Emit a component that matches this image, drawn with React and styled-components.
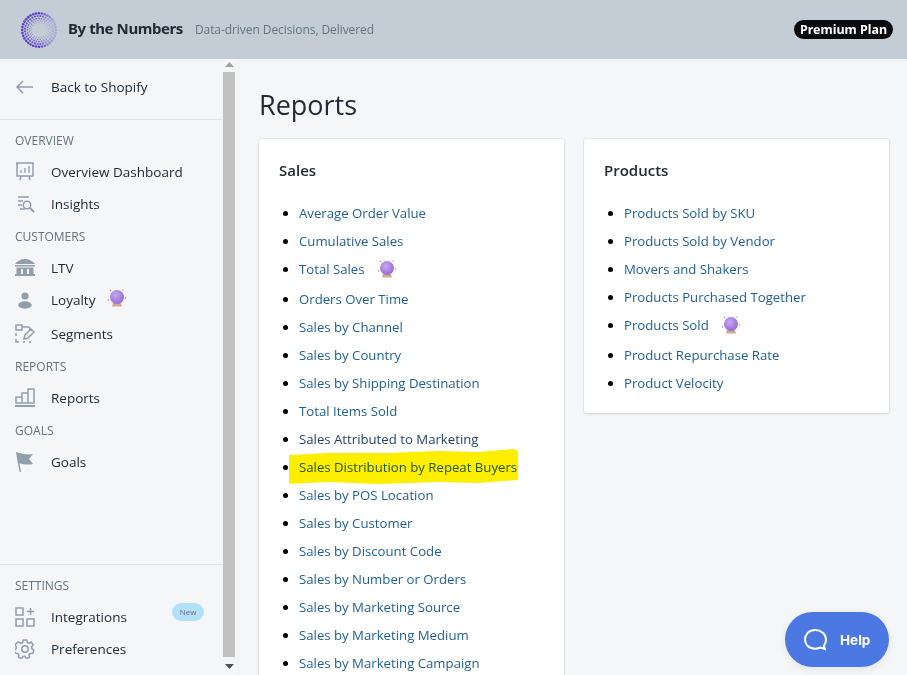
import React from 'react';
import styled, { createGlobalStyle } from 'styled-components';

const Global = createGlobalStyle`
  html, body { margin: 0; padding: 0; height: 100%; overflow: hidden; }
  body { font-family: "Open Sans", "Noto Sans", sans-serif; background: #f4f6f8; color: #212b36; }
  * { box-sizing: border-box; }
`;

const Page = styled.div`display:flex;flex-direction:column;height:675px;overflow:hidden;position:relative;`;
const Header = styled.header`height:59px;flex:none;background:#c4cdd5;display:flex;align-items:center;padding:0 14px 0 21px;`;
const Brand = styled.strong`margin-left:11px;font:700 15px/20px "Noto Sans",sans-serif;color:#212b36;letter-spacing:-.42px;position:relative;top:-2px;`;
const Tagline = styled.span`margin-left:12px;font-size:12px;letter-spacing:-.07px;color:#637381;`;
const Plan = styled.span`margin-left:auto;background:#0b0b0d;color:#fff;border-radius:10px;height:19px;width:99px;display:flex;align-items:center;justify-content:center;font:700 12.5px/19px "Noto Sans",sans-serif;`;
const Body = styled.div`flex:1;display:flex;min-height:0;`;
const Sidebar = styled.aside`width:223px;flex:none;display:flex;flex-direction:column;`;
const BackRow = styled.div`height:61px;flex:none;margin-bottom:4px;display:flex;align-items:center;padding:0 15px 4px 15px;border-bottom:1px solid #dfe3e8;font-size:13.5px;font-weight:500;color:#212b36;`;
const Section = styled.div`height:32px;display:flex;align-items:center;padding-left:15px;font-size:12px;color:#637381;flex:none;`;
const Item = styled.div`height:${p => p.$h || 32}px;flex:none;display:flex;align-items:center;padding:${p => p.$h ? 2 : 0}px 19px 0 15px;font-size:13.5px;font-weight:500;color:#212b36;`;
const IconSlot = styled.span`width:20px;height:20px;flex:none;display:flex;align-items:center;justify-content:center;margin-right:16px;color:#919eab;`;
const Spacer = styled.div`flex:1;`;
const SettingsBlock = styled.div`border-top:1px solid #dfe3e8;flex:none;padding:4px 0 10px;`;
const NewBadge = styled.span`margin-left:auto;align-self:flex-start;margin-top:2px;width:32px;height:18px;border-radius:9px;background:#b4e1fa;font-size:8px;line-height:18px;text-align:center;color:#637381;`;
const Track = styled.div`width:16px;flex:none;background:#f5f6f7;border-right:1px solid #f1f2f3;display:flex;flex-direction:column;padding-right:3px;`;
const Arrow = styled.span`height:${p => p.$h}px;padding-bottom:${p => p.$pb || 0}px;flex:none;display:flex;align-items:center;justify-content:center;`;
const Thumb = styled.div`flex:1;background:#c1c1c1;`;
const Main = styled.main`flex:1;padding:27px 18px 0 20px;min-width:0;overflow:hidden;background:#f4f6f8;`;
const Title = styled.h1`margin:0 0 16px;font-size:27px;line-height:37px;font-weight:500;color:#212b36;`;
const Columns = styled.div`display:grid;grid-template-columns:305px 305px;gap:20px;align-items:start;`;
const Card = styled.section`background:#fff;border-radius:3px;box-shadow:0 0 0 1px rgba(63,63,68,.05),0 1px 3px rgba(63,63,68,.15);padding:20px 20px 16px;`;
const CardTitle = styled.h2`margin:-1px 0 17px;font-size:15px;line-height:24px;font-weight:600;color:#212b36;`;
const List = styled.ul`margin:0;padding:0 0 0 20px;font-size:13.2px;list-style:disc;color:#000;`;
const Row = styled.li`height:${p => p.$ball ? 30 : 28}px;line-height:28px;position:relative;`;
const Link = styled.a`color:${p => p.$dark ? '#23466c' : '#1f5f94'};text-decoration:none;`;
const Ball = styled.span`display:inline-block;margin-left:12px;vertical-align:-5px;`;
const Marker = styled.svg`position:absolute;left:-11px;top:-5px;width:231px;height:37px;mix-blend-mode:multiply;pointer-events:none;`;
const Help = styled.div`position:absolute;left:785px;top:612px;width:104px;height:55px;border-radius:28px;background:#4c78e3;color:#fff;display:flex;align-items:center;padding-left:18px;gap:11px;font:700 13.5px/16px Inter,sans-serif;box-shadow:0 2px 8px rgba(0,0,0,.08);`;

const dots = [];
[[16.8, 36, 1.3], [14, 32, 1.05], [11.6, 28, .85], [9.5, 24, .65], [7.7, 20, .5]].forEach(([r, n, s], k) => {
  for (let i = 0; i < n; i++) {
    const a = (i + (k % 2) * .5) / n * Math.PI * 2;
    const cos = Math.cos(a), sin = Math.sin(a);
    const fade = cos > .1 ? Math.max(.25, 1 - cos * .85) : 1;
    dots.push(<circle key={`${k}-${i}`} cx={18 + r * cos} cy={18 + r * sin} r={s} fill="#5a3fcb" opacity={fade * (1 - k * .12)} />);
  }
});
const Logo = () => <svg width="36" height="36" viewBox="0 0 36 36">{dots}</svg>;

const CrystalBall = () => (
  <svg width="20" height="20" viewBox="0 0 20 20">
    <defs><radialGradient id="cb" cx=".4" cy=".35" r=".7"><stop offset="0" stopColor="#c7a9ee" /><stop offset="1" stopColor="#9468d8" /></radialGradient></defs>
    <path d="M6 15h8l1 3.500H5z" fill="#cfa98e" />
    <circle cx="10" cy="9" r="7" fill="url(#cb)" />
    <circle cx="1.500" cy="12" r=".8" fill="#9a94a8" /><circle cx="18.500" cy="10" r=".8" fill="#9a94a8" />
    <circle cx="3.500" cy="2.500" r=".8" fill="#9a94a8" /><circle cx="16" cy="2" r=".7" fill="#9a94a8" />
  </svg>
);

const Ico = ({ children }) => <svg width="20" height="20" viewBox="0 0 20 20" fill="none" stroke="#919eab" strokeWidth="1.5">{children}</svg>;
const icons = {
  back: <Ico><path d="M18 10H2M8 4l-6 6 6 6" /></Ico>,
  dash: <Ico><path d="M1 1h18M2 1v13h16V1M6 14l-1 4M14 14l1 4" /><path d="M6 11V8M10 11V6M14 11V4" strokeWidth="1.3" /></Ico>,
  insights: <Ico><path d="M3 3h11M3 7h5M3 11h4M5 15h5" /><circle cx="12" cy="11" r="3.700" /><path d="M15 14l4 4" strokeWidth="2" /></Ico>,
  bank: <svg width="20" height="20" viewBox="0 0 20 20" fill="#919eab"><path d="M10 1C6 1 2 3 0 6h20c-2-3-6-5-10-5zM0 7h20v1.500H0zM0 18h20v-2H0zM1.500 9.500h17V16h-4.500v-5h-2v5H8v-5H6v5H1.500z" /></svg>,
  user: <svg width="20" height="20" viewBox="0 0 20 20" fill="#919eab"><circle cx="10" cy="6" r="3.600" /><ellipse cx="10" cy="15" rx="6.800" ry="3.700" /></svg>,
  seg: <Ico><path d="M1 1h6v5H1zM7 3h6c2 0 2 2 2 3" /><path d="M9 15l1-4 6-6 3 3-6 6zM1 9v3M1 15v3h3M8 18h2M14 18h2" /></Ico>,
  rep: <Ico><path d="M1 9h6v6H1zM7 5h6v10H7zM13 1h6v14h-6z" /><path d="M0 18h20" strokeWidth="2" /></Ico>,
  flag: <svg width="20" height="20" viewBox="0 0 20 20" fill="#919eab"><path d="M1 0h1.500l3.500 20H4.600L2.500 9zM2 0c5 2 10 3 16 2l-4 5 4 5c-5 1-9 .6-14-1z" /></svg>,
  integ: <Ico><path d="M1 1h7v7H1zM1 12h7v7H1zM12 12h7v7h-7zM15.500 1v7M12 4.500h7" /></Ico>,
  gear: <Ico><circle cx="10" cy="10" r="3.200" /><path d="M8.300 1h3.400l.6 2.600 1.500.7 2.400-1.300 2.100 2.700-1.700 2 .2 1.800 2 1.600-.9 3.200-2.700.1-1.100 1.300.4 2.700-3.200 1-1.500-2.200h-1.600l-1.500 2.200-3.200-1 .4-2.700-1.100-1.300-2.700-.1-.9-3.200 2-1.600.2-1.800-1.700-2L3.600 3l2.400 1.300 1.500-.7z" /></Ico>,
};

const sales = ['Average Order Value', 'Cumulative Sales', 'Total Sales*', 'Orders Over Time', 'Sales by Channel', 'Sales by Country', 'Sales by Shipping Destination', 'Total Items Sold', 'Sales Attributed to Marketing', 'Sales Distribution by Repeat Buyers', 'Sales by POS Location', 'Sales by Customer', 'Sales by Discount Code', 'Sales by Number or Orders', 'Sales by Marketing Source', 'Sales by Marketing Medium', 'Sales by Marketing Campaign'];
const products = ['Products Sold by SKU', 'Products Sold by Vendor', 'Movers and Shakers', 'Products Purchased Together', 'Products Sold*', 'Product Repurchase Rate', 'Product Velocity'];

const Entry = ({ text }) => {
  const ball = text.endsWith('*');
  const label = ball ? text.slice(0, -1) : text;
  return (
    <Row $ball={ball}>
      <Link href="#" $dark={label === 'Sales Attributed to Marketing'}>{label}</Link>
      {ball && <Ball><CrystalBall /></Ball>}
      {label.startsWith('Sales Distribution') && (
        <Marker viewBox="0 0 231 37" preserveAspectRatio="none"><path d="M1 7 L40 5 L100 5 L150 3 L190 4 L225 1 L230 3 L230 32 L190 35 L150 34 L90 36 L40 34 L1 36 Z" fill="#ffee00" /></Marker>
      )}
    </Row>
  );
};

const Nav = ({ icon, children, h }) => <Item $h={h}><IconSlot>{icons[icon]}</IconSlot>{children}</Item>;

export default function App() {
  return (
    <Page>
      <Global />
      <Header>
        <Logo />
        <Brand>By the Numbers</Brand>
        <Tagline>Data-driven Decisions, Delivered</Tagline>
        <Plan>Premium Plan</Plan>
      </Header>
      <Body>
        <Sidebar>
          <BackRow><IconSlot>{icons.back}</IconSlot>Back to Shopify</BackRow>
          <Section>OVERVIEW</Section>
          <Nav icon="dash">Overview Dashboard</Nav>
          <Nav icon="insights">Insights</Nav>
          <Section>CUSTOMERS</Section>
          <Nav icon="bank">LTV</Nav>
          <Nav icon="user">Loyalty<Ball><CrystalBall /></Ball></Nav>
          <Nav icon="seg" h={34}>Segments</Nav>
          <Section>REPORTS</Section>
          <Nav icon="rep">Reports</Nav>
          <Section>GOALS</Section>
          <Nav icon="flag">Goals</Nav>
          <Spacer />
          <SettingsBlock>
            <Section>SETTINGS</Section>
            <Nav icon="integ">Integrations<NewBadge>New</NewBadge></Nav>
            <Nav icon="gear">Preferences</Nav>
          </SettingsBlock>
        </Sidebar>
        <Track>
          <Arrow $h={13} $pb={3}><svg width="9" height="5"><path d="M4.500 0L9 5H0z" fill="#a3a3a3" /></svg></Arrow>
          <Thumb />
          <Arrow $h={18}><svg width="9" height="5"><path d="M0 0h9L4.500 5z" fill="#505050" /></svg></Arrow>
        </Track>
        <Main>
          <Title>Reports</Title>
          <Columns>
            <Card>
              <CardTitle>Sales</CardTitle>
              <List>{sales.map(s => <Entry key={s} text={s} />)}</List>
            </Card>
            <Card>
              <CardTitle>Products</CardTitle>
              <List>{products.map(s => <Entry key={s} text={s} />)}</List>
            </Card>
          </Columns>
        </Main>
      </Body>
      <Help>
        <svg width="26" height="24" viewBox="0 0 26 24" fill="none" stroke="#fff" strokeWidth="2"><path d="M12 2c6 0 11 4 11 9.500 0 2.500-.8 4.500-2 6l.8 3.500-4.300-1.500c-1.700.8-3.500 1.200-5.500 1.200C6 20.700 2 16.500 2 11.500S6 2 12 2z" /></svg>
        Help
      </Help>
    </Page>
  );
}
